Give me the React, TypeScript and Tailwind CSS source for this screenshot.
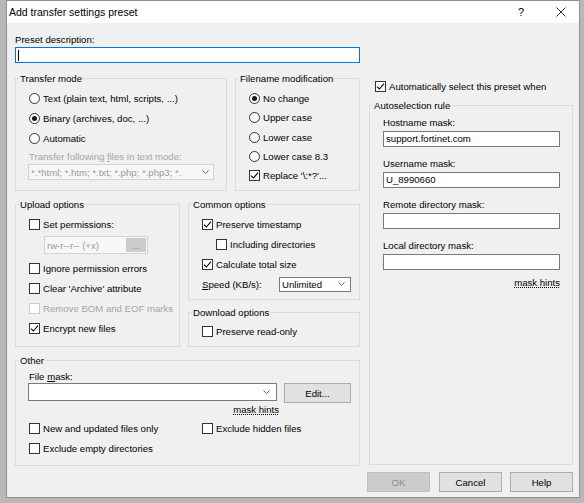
import React from "react";

function Check({ on = false, disabled = false }: { on?: boolean; disabled?: boolean }) {
  return (
    <span
      className={`flex h-[11px] w-[11px] shrink-0 items-center justify-center border bg-white ${
        disabled ? "border-[#cccccc]" : "border-[#333333]"
      }`}
    >
      {on && (
        <svg viewBox="0 0 9 9" className="h-[9px] w-[9px]">
          <path d="M1 4.6 L3.4 7 L8 1.6" fill="none" stroke="#000" strokeWidth="1.1" />
        </svg>
      )}
    </span>
  );
}

function Radio({ on = false }: { on?: boolean }) {
  return (
    <span className="flex h-[11px] w-[11px] shrink-0 items-center justify-center rounded-full border border-[#333333] bg-white">
      {on && <span className="h-[5px] w-[5px] rounded-full bg-[#1a1a1a]" />}
    </span>
  );
}

function Chevron() {
  return (
    <svg viewBox="0 0 7 4" className="h-[4px] w-[7px] shrink-0">
      <path d="M0.5 0.5 L3.5 3.5 L6.5 0.5" fill="none" stroke="#6b6b6b" strokeWidth="1" />
    </svg>
  );
}

function CheckRow({
  label,
  on,
  disabled,
  h = "h-[20px]",
}: {
  label: React.ReactNode;
  on?: boolean;
  disabled?: boolean;
  h?: string;
}) {
  return (
    <div className={`flex items-center gap-[3px] ${h}`}>
      <Check on={on} disabled={disabled} />
      <span className={disabled ? "text-[#a6a6a6]" : ""}>{label}</span>
    </div>
  );
}

function RadioRow({ label, on, h }: { label: string; on?: boolean; h: string }) {
  return (
    <div className={`flex items-center gap-[3px] ${h}`}>
      <Radio on={on} />
      <span>{label}</span>
    </div>
  );
}

function Field({ value }: { value?: string }) {
  return (
    <div className="mt-[2px] h-[16px] w-[177px] border border-[#7a7a7a] bg-white pl-[2px] leading-[14px]">
      {value}
    </div>
  );
}

export default function App() {
  return (
    <div className="h-[503px] w-[584px] overflow-hidden bg-[#b8b8b8] pl-[6px] font-['Liberation_Sans',Arial,sans-serif] text-[9.6px] leading-[13px] text-black">
      <div className="flex h-[498px] w-[574px] flex-col border border-[#8f8f8f] bg-[#f0f0f0]">
        {/* title bar */}
        <div className="flex h-[22px] shrink-0 items-center bg-white pl-[2px]">
          <span className="text-[10.5px]">Add transfer settings preset</span>
          <div className="ml-auto flex items-center pr-[3px]">
            <span className="w-[30px] text-center text-[11px]">?</span>
            <span className="ml-[10px] flex w-[30px] justify-center">
              <svg viewBox="0 0 10 10" className="h-[10px] w-[10px]">
                <path d="M0.5 0.5 L9.5 9.5 M9.5 0.5 L0.5 9.5" stroke="#111" strokeWidth="0.9" />
              </svg>
            </span>
          </div>
        </div>

        <div className="flex gap-[7px] pl-[8px]">
          {/* left column */}
          <div className="flex w-[345px] flex-col">
            <div className="mt-[10px]">Preset description:</div>
            <div className="mt-[1px] flex h-[16px] items-center border border-[#0078d7] bg-white pl-[2px]">
              <span className="h-[11px] w-px bg-black" />
            </div>

            <div className="mt-[9px] flex gap-[8px]">
              <fieldset className="h-[119px] w-[212px] border border-[#dcdcdc]">
                <legend className="ml-[3px] px-[1px]">Transfer mode</legend>
                <div className="flex flex-col pl-[13px] pt-[3px]">
                  <RadioRow h="h-[20px]" label="Text (plain text, html, scripts, ...)" />
                  <RadioRow h="h-[20px]" on label="Binary (archives, doc, ...)" />
                  <RadioRow h="h-[20px]" label="Automatic" />
                  <div className="mt-[2px] text-[#a6a6a6]">
                    Transfer following <span className="underline">f</span>iles in text mode:
                  </div>
                  <div className="-ml-[1px] mt-[1px] flex h-[16px] w-[186px] items-center border border-[#d4d4d4] bg-[#f7f7f7] pr-[4px]">
                    <span className="flex-1 overflow-hidden whitespace-nowrap pl-[2px] text-[#9a9a9a]">
                      *.*html; *.htm; *.txt; *.php; *.php3; *.
                    </span>
                    <Chevron />
                  </div>
                </div>
              </fieldset>

              <fieldset className="h-[119px] w-[125px] border border-[#dcdcdc]">
                <legend className="ml-[3px] px-[1px]">Filename modification</legend>
                <div className="flex flex-col pl-[13px] pt-[4px]">
                  <RadioRow h="h-[19.3px]" on label="No change" />
                  <RadioRow h="h-[19.3px]" label="Upper case" />
                  <RadioRow h="h-[19.3px]" label="Lower case" />
                  <RadioRow h="h-[19.3px]" label="Lower case 8.3" />
                  <CheckRow h="h-[19.3px]" on label={"Replace '\\:*?'..."} />
                </div>
              </fieldset>
            </div>

            <div className="mt-[7px] flex gap-[8px]">
              <fieldset className="h-[149px] w-[165px] border border-[#dcdcdc]">
                <legend className="ml-[3px] px-[1px]">Upload options</legend>
                <div className="flex flex-col pl-[13px] pt-[3px]">
                  <CheckRow label="Set permissions:" />
                  <div className="ml-[15px] mt-[2px] flex h-[18px] w-[104px] items-center border border-[#d4d4d4] bg-[#f7f7f7] pr-[1px]">
                    <span className="flex-1 pl-[2px] text-[#9a9a9a]">rw-r--r-- (+x)</span>
                    <span className="flex h-[14px] w-[20px] items-center justify-center bg-[#cccccc] text-[#8a8a8a]">
                      ...
                    </span>
                  </div>
                  <div className="mt-[4px]">
                    <CheckRow label="Ignore permission errors" />
                  </div>
                  <CheckRow label="Clear 'Archive' attribute" />
                  <CheckRow disabled label="Remove BOM and EOF marks" />
                  <CheckRow on label="Encrypt new files" />
                </div>
              </fieldset>

              <div className="flex flex-col">
                <fieldset className="h-[102px] w-[172px] border border-[#dcdcdc]">
                  <legend className="ml-[3px] px-[1px]">Common options</legend>
                  <div className="flex flex-col pl-[13px] pt-[3px]">
                    <CheckRow on label="Preserve timestamp" />
                    <div className="pl-[14px]">
                      <CheckRow label="Including directories" />
                    </div>
                    <CheckRow on label="Calculate total size" />
                    <div className="mt-[1px] flex h-[18px] items-center">
                      <span className="w-[77px]">
                        <span className="underline">S</span>peed (KB/s):
                      </span>
                      <div className="flex h-[15px] w-[72px] items-center border border-[#7a7a7a] bg-white pr-[5px]">
                        <span className="flex-1 pl-[2px]">Unlimited</span>
                        <Chevron />
                      </div>
                    </div>
                  </div>
                </fieldset>

                <fieldset className="mt-[6px] h-[41px] w-[172px] border border-[#dcdcdc]">
                  <legend className="ml-[3px] px-[1px]">Download options</legend>
                  <div className="flex flex-col pl-[13px] pt-[2px]">
                    <CheckRow label="Preserve read-only" />
                  </div>
                </fieldset>
              </div>
            </div>

            <fieldset className="mt-[7px] h-[112px] w-[345px] border border-[#dcdcdc]">
              <legend className="ml-[3px] px-[1px]">Other</legend>
              <div className="flex flex-col pl-[12px] pt-[3px]">
                <div className="pl-[1px]">
                  File <span className="underline">m</span>ask:
                </div>
                <div className="flex items-start">
                  <div className="flex h-[18px] w-[249px] items-center border border-[#7a7a7a] bg-white pr-[6px]">
                    <span className="flex-1" />
                    <Chevron />
                  </div>
                  <div className="ml-[7px] flex h-[20px] w-[67px] items-center justify-center border border-[#adadad] bg-[#e1e1e1]">
                    Edit...
                  </div>
                </div>
                <div className="w-[251px] text-right">
                  <span className="underline decoration-dotted">mask hints</span>
                </div>
                <div className="mt-[2px] flex pl-[1px]">
                  <div className="w-[173px]">
                    <CheckRow label="New and updated files only" />
                  </div>
                  <CheckRow label="Exclude hidden files" />
                </div>
                <div className="pl-[1px]">
                  <CheckRow label="Exclude empty directories" />
                </div>
              </div>
            </fieldset>
          </div>

          {/* right column */}
          <div className="flex w-[206px] flex-col">
            <div className="mt-[53px] pl-[8px]">
              <CheckRow on label="Automatically select this preset when" />
            </div>
            <fieldset className="ml-[2px] mt-[3px] h-[366px] w-[204px] border border-[#dcdcdc]">
              <legend className="ml-[3px] px-[1px]">Autoselection rule</legend>
              <div className="flex flex-col pl-[13px] pt-[4px]">
                <div>Hostname mask:</div>
                <Field value="support.fortinet.com" />
                <div className="mt-[10px]">Username mask:</div>
                <Field value="U_8990660" />
                <div className="mt-[10px]">Remote directory mask:</div>
                <Field />
                <div className="mt-[10px]">Local directory mask:</div>
                <Field />
                <div className="mt-[6px] w-[177px] text-right">
                  <span className="underline decoration-dotted">mask hints</span>
                </div>
              </div>
            </fieldset>
            <div className="mt-[7px] flex">
              <div className="flex h-[20px] w-[63px] items-center justify-center border border-[#bfbfbf] bg-[#cccccc] text-[#8a8a8a]">
                OK
              </div>
              <div className="ml-[9px] flex h-[20px] w-[63px] items-center justify-center border border-[#adadad] bg-[#e1e1e1]">
                Cancel
              </div>
              <div className="ml-[8px] flex h-[20px] w-[63px] items-center justify-center border border-[#adadad] bg-[#e1e1e1]">
                Help
              </div>
            </div>
          </div>
        </div>
      </div>
    </div>
  );
}
